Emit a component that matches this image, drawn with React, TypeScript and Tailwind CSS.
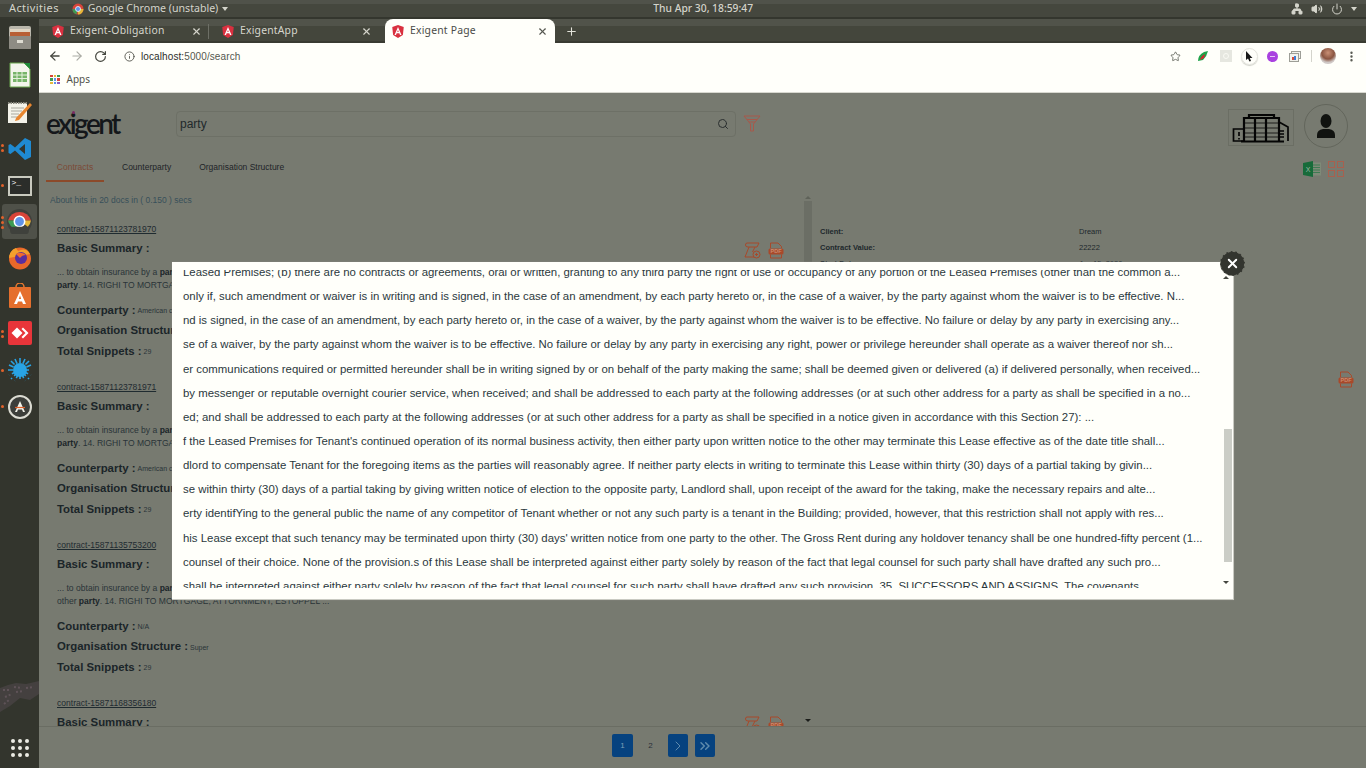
import React from "react";
import { ArrowLeft, ArrowRight, RotateCw, Info, Star, X, Plus, MoreVertical, Search, ChevronRight, ChevronsRight, Volume2, Power, Network } from "lucide-react";

const modalLines = [
  "Leased Premises; (b) there are no contracts or agreements, oral or written, granting to any third party the right of use or occupancy of any portion of the Leased Premises (other than the common a...",
  "only if, such amendment or waiver is in writing and is signed, in the case of an amendment, by each party hereto or, in the case of a waiver, by the party against whom the waiver is to be effective. N...",
  "nd is signed, in the case of an amendment, by each party hereto or, in the case of a waiver, by the party against whom the waiver is to be effective. No failure or delay by any party in exercising any...",
  "se of a waiver, by the party against whom the waiver is to be effective. No failure or delay by any party in exercising any right, power or privilege hereunder shall operate as a waiver thereof nor sh...",
  "er communications required or permitted hereunder shall be in writing signed by or on behalf of the party making the same; shall be deemed given or delivered (a) if delivered personally, when received...",
  "by messenger or reputable overnight courier service, when received; and shall be addressed to each party at the following addresses (or at such other address for a party as shall be specified in a no...",
  "ed; and shall be addressed to each party at the following addresses (or at such other address for a party as shall be specified in a notice given in accordance with this Section 27): ...",
  "f the Leased Premises for Tenant's continued operation of its normal business activity, then either party upon written notice to the other may terminate this Lease effective as of the date title shall...",
  "dlord to compensate Tenant for the foregoing items as the parties will reasonably agree. If neither party elects in writing to terminate this Lease within thirty (30) days of a partial taking by givin...",
  "se within thirty (30) days of a partial taking by giving written notice of election to the opposite party, Landlord shall, upon receipt of the award for the taking, make the necessary repairs and alte...",
  "erty identifYing to the general public the name of any competitor of Tenant whether or not any such party is a tenant in the Building; provided, however, that this restriction shall not apply with res...",
  "his Lease except that such tenancy may be terminated upon thirty (30) days' written notice from one party to the other. The Gross Rent during any holdover tenancy shall be one hundred-fifty percent (1...",
  "counsel of their choice. None of the provision.s of this Lease shall be interpreted against either party solely by reason of the fact that legal counsel for such party shall have drafted any such pro...",
  "shall be interpreted against either party solely by reason of the fact that legal counsel for such party shall have drafted any such provision. 35. SUCCESSORS AND ASSIGNS. The covenants",
];

const results = [
  { id: "contract-15871123781970", lead: "party", cp: "American c", org: "", icons: true },
  { id: "contract-15871123781971", lead: "party", cp: "American c", org: "", icons: false },
  { id: "contract-15871135753200", lead: "other party", cp: "N/A", org: "Super", icons: false },
  { id: "contract-15871168356180", lead: "", cp: "", org: "", icons: true },
];

function Angular() {
  return (
    <svg width="12" height="13" viewBox="0 0 24 26" className="shrink-0">
      <path d="M12 0 L23.5 4 L21.8 20 L12 26 L2.2 20 L0.5 4 Z" fill="#d9303f" />
      <path d="M12 4 L5 20 H8 L9.4 16.5 H14.6 L16 20 H19 Z M10.5 14 L12 10 L13.5 14 Z" fill="#fff" />
    </svg>
  );
}

function Tab({ title, active, sep }: { title: string; active?: boolean; sep?: boolean }) {
  return (
    <div className={`relative flex h-[24px] w-[170px] items-center pr-[7px] ${active ? "rounded-t-[8px] bg-[#fffffa] pl-[7px] text-[#4a4c48]" : "pl-[13px] text-[#d6d6cd]"}`}>
      <Angular />
      <span className="ml-[6px] flex-1 text-[10.4px] tracking-[0.2px]">{title}</span>
      <X size={11} strokeWidth={2.4} className={active ? "text-[#555750]" : "text-[#d6d6cd]"} />
      {sep && <span className="absolute right-0 top-[5px] h-[15px] w-px bg-[#6d6f66]" />}
    </div>
  );
}

function Dock() {
  const pip = "absolute left-[1px] h-[3px] w-[3px] rounded-full bg-[#e2622b]";
  return (
    <div className="flex h-full w-[39px] shrink-0 flex-col items-center bg-[#33352d]">
      <div className="flex h-[37px] w-full items-center justify-center">
        <svg width="24" height="25" viewBox="0 0 24 25">
          <rect x="1" y="1" width="22" height="23" rx="2" fill="#b9b6ab" />
          <rect x="2" y="4" width="20" height="3" fill="#e0d6c4" />
          <rect x="2" y="7" width="20" height="4" fill="#b85f35" />
          <rect x="1" y="11" width="22" height="13" rx="1" fill="#8e8c84" />
          <rect x="9" y="15" width="6" height="3" fill="#dedcd2" />
        </svg>
      </div>
      <div className="flex h-[37px] w-full items-center justify-center">
        <svg width="22" height="26" viewBox="0 0 22 26">
          <path d="M1 1 H15 L21 7 V25 H1 Z" fill="#f3f5ec" stroke="#6aa84f" />
          <path d="M15 1 L21 1 V7 Z" fill="#1f8a3b" />
          <rect x="4" y="10" width="14" height="10" fill="#77b46a" />
          <path d="M4 13 H18 M4 16.500 H18 M8 10 V20 M13 10 V20" stroke="#e5f0dc" />
        </svg>
      </div>
      <div className="flex h-[37px] w-full items-center justify-center">
        <svg width="26" height="24" viewBox="0 0 26 24">
          <rect x="1" y="3" width="19" height="20" fill="#f4f3ea" />
          <path d="M1 3 H20" stroke="#8b8a80" strokeWidth="2" strokeDasharray="1.500 1" />
          <path d="M4 8 H17 M4 11 H15 M4 14 H12 M4 17 H13" stroke="#a9a89e" />
          <path d="M9 18 L23 3 L25 5 L12 20 L8 21 Z" fill="#e8862f" />
        </svg>
      </div>
      <div className="relative flex h-[37px] w-full items-center justify-center">
        <span className={`${pip} top-[14px]`} />
        <span className={`${pip} top-[19px]`} />
        <svg width="24" height="24" viewBox="0 0 24 24" className="ml-[1px]">
          <path d="M17 1 L23 4 V20 L17 23 L7 13.500 L2.500 17 L0.500 16 V8 L2.500 7 L7 10.500 Z M17 7 L11 12 L17 17 Z" fill="#1f8ad2" fillRule="evenodd" />
        </svg>
      </div>
      <div className="relative flex h-[37px] w-full items-center justify-center">
        <span className={`${pip} top-[17px]`} />
        <div className="h-[20px] w-[24px] border-[2px] border-[#c9cabf] bg-[#2b2d2a] pl-[2px] font-['Liberation_Mono',monospace] text-[8px] leading-[10px] text-white">&gt;_</div>
      </div>
      <div className="relative flex h-[35px] w-[35px] items-center justify-center rounded-[3px] bg-[#4f5149]">
        <span className="absolute -left-[1px] top-[12px] h-[3px] w-[3px] rounded-full bg-[#e2622b]" />
        <span className="absolute -left-[1px] top-[17px] h-[3px] w-[3px] rounded-full bg-[#e2622b]" />
        <span className="absolute -left-[1px] top-[22px] h-[3px] w-[3px] rounded-full bg-[#e2622b]" />
        <svg width="25" height="25" viewBox="0 0 24 24">
          <circle cx="12" cy="12" r="12" fill="#3f413c" />
          <path d="M1 11 A11.500 11.500 0 0 1 23 11 H12 Z" fill="#d8443a" />
          <path d="M1 11 A11 11 0 0 0 8 19 L12 11 Z" fill="#3d9a53" />
          <path d="M23 11 A11 11 0 0 1 20 17 L12 11 Z" fill="#e6b93a" />
          <circle cx="12" cy="12" r="5" fill="#5f93e8" stroke="#fff" strokeWidth="1.500" />
          <rect x="3" y="17" width="18" height="7" rx="3" fill="#3f413c" />
        </svg>
      </div>
      <div className="flex h-[38px] w-full items-center justify-center">
        <svg width="24" height="24" viewBox="0 0 24 24">
          <circle cx="12" cy="12.500" r="11" fill="#e9682a" />
          <path d="M1 12 A11 11 0 0 1 8 2 L10 5 Q16 2 20 5 L22 8 Z" fill="#f4a02c" />
          <circle cx="13" cy="12" r="6" fill="#5a2f9e" />
          <path d="M8 8 Q13 5 18 9 Q14 9 12 12 Z" fill="#f26a2e" />
        </svg>
      </div>
      <div className="flex h-[37px] w-full items-center justify-center">
        <svg width="24" height="26" viewBox="0 0 24 26">
          <path d="M8 4 A4 4 0 0 1 16 4" fill="none" stroke="#e9782f" strokeWidth="1.500" />
          <rect x="1" y="4" width="22" height="21" rx="1" fill="#e56f2d" />
          <path d="M12 8 L6 21 H9 L10 18.500 H14 L15 21 H18 Z" fill="#fff" fillRule="evenodd" />
          <path d="M10.800 16 H13.200 L12 12.500 Z" fill="#e56f2d" />
        </svg>
      </div>
      <div className="relative flex h-[37px] w-full items-center justify-center">
        <span className={`${pip} top-[16px]`} />
        <span className={`${pip} top-[21px]`} />
        <svg width="24" height="24" viewBox="0 0 24 24" className="ml-[1px]">
          <rect width="24" height="24" rx="2" fill="#e8353a" />
          <path d="M9 6.500 L14.500 12 L9 17.500 L3.500 12 Z" fill="#fff" />
          <path d="M15 6.500 L20.500 12 L15 17.500 L13.500 16 L17.500 12 L13.500 8 Z" fill="#fff" />
        </svg>
      </div>
      <div className="relative flex h-[37px] w-full items-center justify-center">
        <span className={`${pip} top-[18px]`} />
        <svg width="26" height="26" viewBox="0 0 26 26">
          <circle cx="13" cy="13" r="7" fill="#29a3e4" />
          <path d="M13 1 V25 M1 13 H25 M4 4 L22 22 M22 4 L4 22 M8 2 L18 24 M18 2 L8 24 M2 8 L24 18 M24 8 L2 18" stroke="#29a3e4" strokeWidth="1.600" strokeDasharray="5 3" />
        </svg>
      </div>
      <div className="relative flex h-[37px] w-full items-center justify-center">
        <span className={`${pip} top-[17px]`} />
        <svg width="24" height="24" viewBox="0 0 24 24">
          <circle cx="12" cy="12" r="11" fill="#3c3e3a" stroke="#dcdcd3" strokeWidth="2" />
          <path d="M12 6 L7 17 H9 L10 14.500 H14 L15 17 H17 Z" fill="#f1f1e8" />
          <path d="M7 12.500 H17" stroke="#e2622b" strokeWidth="1.200" />
        </svg>
      </div>
      <svg width="39" height="32" viewBox="0 0 39 32" className="mt-[255px] shrink-0">
        <path d="M0 8 L8 5 L16 3 L26 4 L39 1 V14 L30 20 L20 18 L10 26 L0 32 Z" fill="#44403f" />
        <path d="M3 10 L9 10 M14 7 L22 8 M26 8 L34 7 M5 17 L12 14 M16 12 L24 11 M4 24 L9 20" stroke="#5f5358" strokeWidth="2" strokeDasharray="2 2" />
      </svg>
      <div className="mt-auto mb-[11px] grid grid-cols-3 gap-[3px]">
        {Array.from({ length: 9 }).map((_, i) => (
          <span key={i} className="h-[4px] w-[4px] rounded-full bg-[#ecece4]" />
        ))}
      </div>
    </div>
  );
}

function PdfIcon({ className }: { className?: string }) {
  return (
    <svg width="16" height="17" viewBox="0 0 16 17" className={className} fill="none">
      <path d="M2.500 6 V1 H10 L13.500 4.500 V6 M2.500 12.500 V16 H13.500 V12.500" stroke="#a8492a" />
      <rect x="0.500" y="6.500" width="15" height="6" rx="1.500" fill="#a8492a" />
      <text x="8" y="11.300" textAnchor="middle" fontSize="5.500" fontWeight="700" fill="#c98c70" fontFamily="Liberation Sans, sans-serif">PDF</text>
    </svg>
  );
}

function ScrollIcon() {
  return (
    <svg width="17" height="17" viewBox="0 0 17 17" fill="none" stroke="#a8492a" strokeWidth="1">
      <path d="M3 1 H15 L13 5 H4 Q1.500 5 1.500 3 Q1.500 1 3 1 Z" />
      <path d="M5 5 L1 15 H10" />
      <path d="M11 5 L8.500 10" />
      <circle cx="12.500" cy="12.500" r="3.500" />
      <path d="M12.500 11 V14 M11 12.500 H14" />
    </svg>
  );
}

function ResultCard({ r }: { r: (typeof results)[number] }) {
  return (
    <div className="h-[158px] shrink-0 pl-[7px]">
      <div className="pt-[1px] text-[8.55px] leading-[12px] text-[#1f2b30] underline">{r.id}</div>
      <div className="mt-[4px] flex h-[20px] items-center justify-between">
        <span className="text-[11.4px] font-bold text-[#1b2529]">Basic Summary :</span>
        {r.icons && (
          <span className="mt-[2px] mr-[20px] flex items-center gap-[7px]">
            <ScrollIcon />
            <PdfIcon />
          </span>
        )}
      </div>
      <div className="mt-[7px] w-[700px] text-[8.55px] leading-[13px] text-[#2a3438]">
        ... to obtain insurance by a <b className="text-[#1b2529]">party</b> and in the event of loss, to make a claim against the
        <br />
        {r.lead === "other party" ? <>other <b className="text-[#1b2529]">party</b></> : <b className="text-[#1b2529]">party</b>}. 14. RIGHI TO MORTGAGE, ATTORNMENT, ESTOPPEL ...
      </div>
      <div className="mt-[8px] flex h-[21px] items-center text-[11.4px] font-bold text-[#1b2529]">
        Counterparty :<span className="ml-[2px] mt-[2px] text-[7px] font-normal text-[#2a3438]">{r.cp}</span>
      </div>
      <div className="flex h-[20px] items-center text-[11.4px] font-bold text-[#1b2529]">
        Organisation Structure :<span className="ml-[2px] mt-[2px] text-[7px] font-normal text-[#2a3438]">{r.org}</span>
      </div>
      <div className="flex h-[21px] items-center text-[11.4px] font-bold text-[#1b2529]">
        Total Snippets :<span className="ml-[2px] mt-[2px] text-[7px] font-normal text-[#2a3438]">29</span>
      </div>
    </div>
  );
}

export default function App() {
  return (
    <div className="relative flex h-[768px] w-[1366px] flex-col overflow-hidden bg-[#777a70] font-['Liberation_Sans',sans-serif]">
      {/* gnome bar */}
      <div className="flex h-[19px] shrink-0 items-center border-b-[2px] border-[#34362e] bg-[linear-gradient(#50524a_0,#50524a_4px,#45473e_4px)] font-['Noto_Sans',sans-serif] text-[11px] text-[#d4d4cb]">
        <span className="ml-[9px] tracking-[0.4px]">Activities</span>
        <svg width="12" height="12" viewBox="0 0 24 24" className="ml-[13px]">
          <circle cx="12" cy="12" r="11" fill="#d8443a" />
          <path d="M1 12 A11 11 0 0 0 9 22.500 L12 12 Z" fill="#3d9a53" />
          <path d="M23 12 A11 11 0 0 1 12 23 L12 12 Z" fill="#e6b93a" />
          <circle cx="12" cy="12" r="5" fill="#5f93e8" stroke="#fff" strokeWidth="1.500" />
        </svg>
        <span className="ml-[4px] text-[10.6px]">Google Chrome (unstable)</span>
        <span className="ml-[4px] h-0 w-0 border-x-[3.5px] border-t-[4px] border-x-transparent border-t-[#d4d4cb]" />
        <span className="ml-[425px] text-[10.3px] font-medium">Thu Apr 30, 18:59:47</span>
        <div className="ml-auto mr-[9px] flex items-center gap-[8px]">
          <Network size={12} fill="#d4d4cb" />
          <Volume2 size={12} fill="#d4d4cb" />
          <Power size={12} />
          <span className="h-0 w-0 border-x-[3.5px] border-t-[4px] border-x-transparent border-t-[#d4d4cb]" />
        </div>
      </div>

      <div className="flex min-h-0 flex-1">
        <Dock />

        <div className="flex min-w-0 flex-1 flex-col">
          {/* chrome */}
          <div className="flex h-[24px] shrink-0 items-end bg-[linear-gradient(#51534a_0,#51534a_7px,#44463c_7px,#44463c_22px,#393b32_22px)] font-['Noto_Sans',sans-serif]">
            <Tab title="Exigent-Obligation" sep />
            <Tab title="ExigentApp" sep={false} />
            <div className="w-[6px]" />
            <Tab title="Exigent Page" active />
            <Plus size={13} strokeWidth={2} className="mb-[5px] ml-[10px] text-[#e3e3da]" />
          </div>
          <div className="shrink-0 border-b border-[#d8d8d0] bg-[#fffffa]">
            <div className="flex h-[26px] items-center text-[#55574f]">
              <ArrowLeft size={14} strokeWidth={2.2} className="ml-[9px] text-[#45473f]" />
              <ArrowRight size={14} strokeWidth={2} className="ml-[8px] text-[#aaaba4]" />
              <RotateCw size={13} strokeWidth={2.2} className="ml-[10px] text-[#45473f]" />
              <Info size={11} className="ml-[17px]" />
              <span className="ml-[6px] text-[10px] tracking-[0.1px]">
                <span className="text-[#2c2e2a]">localhost:</span>5000/search
              </span>
              <Star size={11} strokeWidth={1.7} className="ml-auto text-[#55574f]" />
              <svg width="12" height="12" viewBox="0 0 12 12" className="ml-[16px]">
                <path d="M1 11 Q1 5 7 2 L11 1 Q10 6 6 10 Z" fill="#1fa34a" />
                <path d="M3 10 Q4 6 8 4 L7 8 Z" fill="#d8232f" />
              </svg>
              <span className="ml-[11px] flex h-[12px] w-[12px] items-center justify-center bg-[#e6e7e0]">
                <span className="h-[6px] w-[6px] rounded-full border border-[#fafaf4]" />
              </span>
              <span className="ml-[9px] flex h-[17px] w-[17px] items-center justify-center rounded-full border border-[#e3e3dc] shadow-[0_1px_1px_#cfd0c8]">
                <svg width="9" height="11" viewBox="0 0 9 11">
                  <path d="M1 0 V9 L3 7.500 L4.500 10.500 L6 10 L4.800 7 H7.500 Z" fill="#1a1a1a" />
                </svg>
              </span>
              <span className="ml-[9px] flex h-[11px] w-[11px] items-center justify-center rounded-full bg-[#a941e0]">
                <span className="h-px w-[5px] bg-[#e5c4f6]" />
              </span>
              <svg width="12" height="11" viewBox="0 0 12 11" className="ml-[11px]">
                <rect x="2.500" y="0.500" width="9" height="7" fill="#f2f2ec" stroke="#9d9e97" />
                <rect x="0.500" y="2.500" width="9" height="8" fill="#f2f2ec" stroke="#9d9e97" />
                <rect x="3" y="6" width="2" height="3" fill="#d64a3a" />
                <rect x="5" y="5" width="2" height="4" fill="#3e7fd6" />
              </svg>
              <span className="ml-[10px] h-[12px] w-px bg-[#d4d4cc]" />
              <span className="ml-[8px] h-[16px] w-[16px] rounded-full bg-[radial-gradient(circle_at_50%_30%,#c98f75_0,#8a5440_45%,#cfc8c6_70%)]" />
              <MoreVertical size={13} strokeWidth={2.4} className="ml-[9px] mr-[8px] text-[#55574f]" />
            </div>
            <div className="flex h-[23px] items-center pl-[11px] pb-[2px]">
              <div className="grid grid-cols-3 gap-[1px]">
                {["#d8443a", "#e6b93a", "#3d9a53", "#3d9a53", "#5f93e8", "#d8443a", "#e6b93a", "#5f93e8", "#8a5cc2"].map((c, i) => (
                  <span key={i} className="h-[2.5px] w-[2.5px]" style={{ backgroundColor: c }} />
                ))}
              </div>
              <span className="ml-[7px] font-['Noto_Sans',sans-serif] text-[10px] text-[#50524a]">Apps</span>
            </div>
          </div>

          {/* page */}
          <div className="flex min-h-0 flex-1 flex-col">
            <div className="relative flex h-[62px] shrink-0 items-start pl-[7px]">
              <div className="relative mt-[14px] w-[130px] font-['Lato',sans-serif] text-[28px] font-semibold leading-[32px] tracking-[-2.6px] text-[#14171a]">
                exigent
                <span className="absolute left-[26px] top-[4px] h-[3px] w-[3px] rounded-full bg-[#7b2a63]" />
              </div>
              <div className="mt-[18px] flex h-[26px] w-[560px] items-center rounded-[4px] border border-[#6d7066] pl-[3px] pr-[6px] text-[12px] text-[#22292b]">
                party
                <Search size={12} className="ml-auto text-[#2a2f2f]" />
              </div>
              <svg width="18" height="17" viewBox="0 0 18 17" fill="none" stroke="#a8584a" className="mt-[22px] ml-[7px]">
                <path d="M1 1 H17 L10.500 9 V16 H7.500 V9 Z" />
                <path d="M4 4.500 H14 M6 7 H12" />
              </svg>
              <div className="ml-auto mt-[16px] flex h-[37px] w-[66px] items-center justify-center border border-[#6b6e64]">
                <svg width="58" height="30" viewBox="0 0 58 30" fill="none" stroke="#050505" strokeWidth="1">
                  <path d="M12 16 H1.500 V28 H12 M7 19 V23 M7 25 V26.500" strokeWidth="1.700" />
                  <path d="M12 28 V5 H47 V28" strokeWidth="2.200" />
                  <path d="M17 5 V2 H42 V5 M23 5 V28 M34 5 V28" strokeWidth="2.200" />
                  <path d="M12 10 H47 M12 15 H47 M12 20 H47 M12 24 H47" strokeWidth="0.800" />
                  <path d="M47 9 L56 14 V28 M47 18 H52 M47 21 H52 M47 24 H52" strokeWidth="1.700" />
                  <path d="M9 28.500 H52" strokeWidth="2" />
                </svg>
              </div>
              <div className="ml-[10px] mr-[18px] mt-[11px] flex h-[44px] w-[44px] items-center justify-center rounded-full border border-[#63665c]">
                <svg width="20" height="26" viewBox="0 0 20 26" fill="#111310">
                  <ellipse cx="10" cy="8" rx="5.500" ry="7" />
                  <path d="M1 25 V22 Q1 17 7 16 H13 Q19 17 19 22 V25 Z" />
                </svg>
              </div>
            </div>

            <div className="relative flex h-[27px] shrink-0 pl-[7px] text-[8.5px]">
              <span className="flex h-[27px] w-[58px] items-center justify-center border-b-[2px] border-[#8c4a2a] text-[#7c4a37]">Contracts</span>
              <span className="ml-[18px] pt-[6px] text-[#1e2428]">Counterparty</span>
              <span className="ml-[28px] pt-[6px] text-[#1e2428]">Organisation Structure</span>
              <div className="ml-auto mr-[22px] mt-[6px] flex items-start gap-[7px]">
                <svg width="18" height="16" viewBox="0 0 18 16">
                  <rect x="7" y="1.500" width="11" height="13" fill="#7f8a78" />
                  <path d="M10 4 H17 M10 6.500 H17 M10 9 H17 M10 11.500 H17" stroke="#3f7a53" />
                  <path d="M0 2 L10 0 V16 L0 14 Z" fill="#176b3a" />
                  <text x="5" y="11" textAnchor="middle" fontSize="7" fill="#9db8a5" fontFamily="Liberation Sans, sans-serif">X</text>
                </svg>
                <div className="grid grid-cols-2 gap-[2px]">
                  {[0, 1, 2, 3].map((i) => (
                    <span key={i} className="h-[7px] w-[7px] border border-[#a8604e]" />
                  ))}
                </div>
              </div>
            </div>

            <div className="flex min-h-0 flex-1 overflow-hidden pl-[11px]">
              <div className="flex w-[754px] shrink-0 flex-col overflow-hidden">
                <div className="mt-[12px] h-[19px] shrink-0 text-[8.5px] leading-[12px] text-[#37505a]">About hits in 20 docs in ( 0.150 ) secs</div>
                <div className="flex flex-col pt-[9px]">
                  {results.map((r) => (
                    <ResultCard key={r.id} r={r} />
                  ))}
                </div>
              </div>

              <div className="flex w-[8px] shrink-0 flex-col items-center pt-[14px]">
                <span className="h-0 w-0 border-x-[3px] border-b-[3px] border-x-transparent border-b-[#5f6259]" />
                <span className="mt-[2px] h-[200px] w-[8px] bg-[#6b6e65]" />
                <span className="mt-auto mb-[4px] h-0 w-0 border-x-[3px] border-t-[3px] border-x-transparent border-t-[#1b1d1a]" />
              </div>

              <div className="relative min-w-0 flex-1 pl-[8px] pt-[45px] text-[7.5px] text-[#1d282c]">
                <div className="grid grid-cols-[259px_1fr] gap-y-[7px] leading-[9px]">
                  <b>Client:</b>
                  <span>Dream</span>
                  <b>Contract Value:</b>
                  <span>22222</span>
                  <b>Start Date:</b>
                  <span>Jun 15, 2020</span>
                </div>
                <PdfIcon className="absolute left-[526px] top-[189px]" />
              </div>
            </div>

            <div className="flex h-[42px] shrink-0 items-start border-t border-[#6a6d63] pl-[573px] pt-[7px]">
              <span className="flex h-[23px] w-[21px] items-center justify-center rounded-[2px] bg-[#06427f] text-[8px] text-[#7f9eb8]">1</span>
              <span className="flex h-[23px] w-[35px] items-center justify-center text-[8px] text-[#2a2f38]">2</span>
              <span className="flex h-[23px] w-[20px] items-center justify-center rounded-[2px] bg-[#06427f] text-[#5f8bad]">
                <ChevronRight size={16} strokeWidth={1.5} />
              </span>
              <span className="ml-[7px] flex h-[23px] w-[20px] items-center justify-center rounded-[2px] bg-[#06427f] text-[#5f8bad]">
                <ChevronsRight size={16} strokeWidth={2.2} />
              </span>
            </div>
          </div>
        </div>
      </div>

      {/* snippets modal */}
      <div className="absolute left-[172px] top-[262px] h-[338px] w-[1062px] border-b border-r border-[#c9cac2] bg-[#fffffa] shadow-[0_0_1px_#8d9086]">
        <div className="mt-[8px] h-[318px] overflow-hidden pl-[11px]">
          <div className="-mt-[5px]">
            {modalLines.map((l, i) => (
              <div key={i} className="h-[24.15px] whitespace-nowrap text-[11.4px] leading-[14px] text-[#2b383d]">
                {l}
              </div>
            ))}
          </div>
        </div>
        <span className="absolute right-[4px] top-[14px] h-0 w-0 border-x-[3px] border-b-[3px] border-x-transparent border-b-[#44463f]" />
        <span className="absolute right-[1px] top-[167px] h-[133px] w-[8px] bg-[#cbcdc6]" />
        <span className="absolute bottom-[15px] right-[4px] h-0 w-0 border-x-[3px] border-t-[3px] border-x-transparent border-t-[#44463f]" />
        <button className="absolute -right-[12px] -top-[11px] flex h-[25px] w-[25px] items-center justify-center rounded-full border border-dashed border-[#77796f] bg-[#33352f] text-white">
          <X size={15} strokeWidth={3} />
        </button>
      </div>
    </div>
  );
}
